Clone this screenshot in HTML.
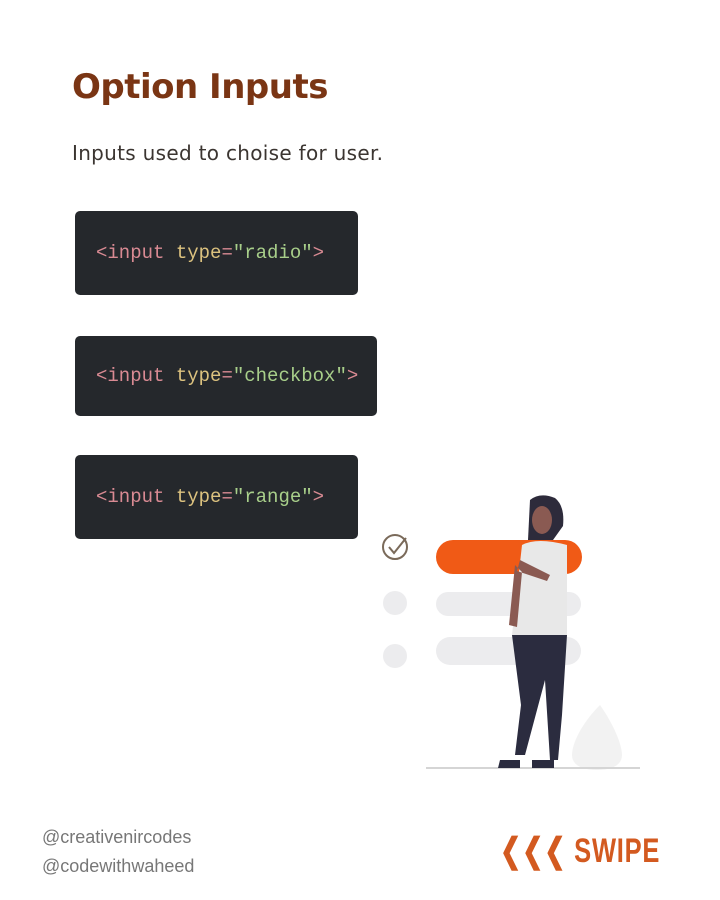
<!DOCTYPE html>
<html><head><meta charset="utf-8"><style>
body{margin:0;width:720px;height:900px;background:#fff;position:relative;overflow:hidden;font-family:"Liberation Sans",sans-serif}
.t{position:absolute;left:72px;top:67px;font-family:"DejaVu Sans",sans-serif;font-size:34px;font-weight:bold;color:#7a3514;letter-spacing:-0.5px}
.s{position:absolute;left:72px;top:141px;font-family:"DejaVu Sans",sans-serif;font-size:20px;color:#3b3531;letter-spacing:0.3px}
.c{position:absolute;left:75px;background:#25282c;border-radius:5px;font-family:"Liberation Mono",monospace;font-size:19px;color:#d98a93;box-sizing:border-box;padding-left:21px;display:flex;align-items:center}
.y{color:#dcc27f}.g{color:#a8cf8a}.p{color:#d98a93}
.f{position:absolute;left:42px;font-size:18px;color:#777}
.sw{position:absolute;left:500px;top:831px;font-size:34px;font-weight:bold;color:#d35a20;letter-spacing:1px;transform:scaleX(0.75);transform-origin:left}
</style></head><body>
<div class="t">Option Inputs</div>
<div class="s">Inputs used to choise for user.</div>
<div class="c" style="top:211px;width:283px;height:84px">&lt;input&nbsp;<span class="y">type</span><span class="p">=</span><span class="g">"radio"</span>&gt;</div>
<div class="c" style="top:336px;width:302px;height:80px">&lt;input&nbsp;<span class="y">type</span><span class="p">=</span><span class="g">"checkbox"</span>&gt;</div>
<div class="c" style="top:455px;width:283px;height:84px">&lt;input&nbsp;<span class="y">type</span><span class="p">=</span><span class="g">"range"</span>&gt;</div>
<svg style="position:absolute;left:0;top:0" width="720" height="900">
<circle cx="395" cy="547" r="12" fill="none" stroke="#7a6a5a" stroke-width="2"/>
<path d="M389 547l5 6 12-15" fill="none" stroke="#7a6a5a" stroke-width="2"/>
<circle cx="395" cy="603" r="12" fill="#ececee"/>
<circle cx="395" cy="656" r="12" fill="#ececee"/>
<rect x="436" y="592" width="145" height="24" rx="12" fill="#ececee"/>
<rect x="436" y="637" width="145" height="28" rx="14" fill="#ececee"/>
<path d="M600 705c-20 20-28 40-28 50 0 10 10 15 25 15s25-5 25-15c0-10-8-30-22-50z" fill="#f2f2f2"/>
<line x1="426" y1="768" x2="640" y2="768" stroke="#d5d5d5" stroke-width="2"/>
<rect x="436" y="540" width="146" height="34" rx="17" fill="#f05a16"/>
<path d="M530 500q10-8 25-2q10 8 8 28l-10 14h-25z" fill="#2d2b3b"/>
<ellipse cx="542" cy="520" rx="10" ry="14" fill="#8a5a52"/>
<path d="M522 545q15-8 45 0l0 90h-55z" fill="#e8e8e8"/>
<path d="M512 635h55l-5 80-4 45h-8l-5-80-12 45-8 30h-10l6-50z" fill="#2b2c3f"/>
<path d="M500 760h20v8h-22zM532 760h22v8h-22z" fill="#2b2c3f"/>
<path d="M515 565l-6 60 8 2 5-55zM520 560l30 15-3 6-30-10z" fill="#8a5a52"/>
</svg>
<div class="f" style="top:827px">@creativenircodes</div>
<div class="f" style="top:856px">@codewithwaheed</div>
<div class="sw">&#x276E;&#x276E;&#x276E; SWIPE</div>
</body></html>
